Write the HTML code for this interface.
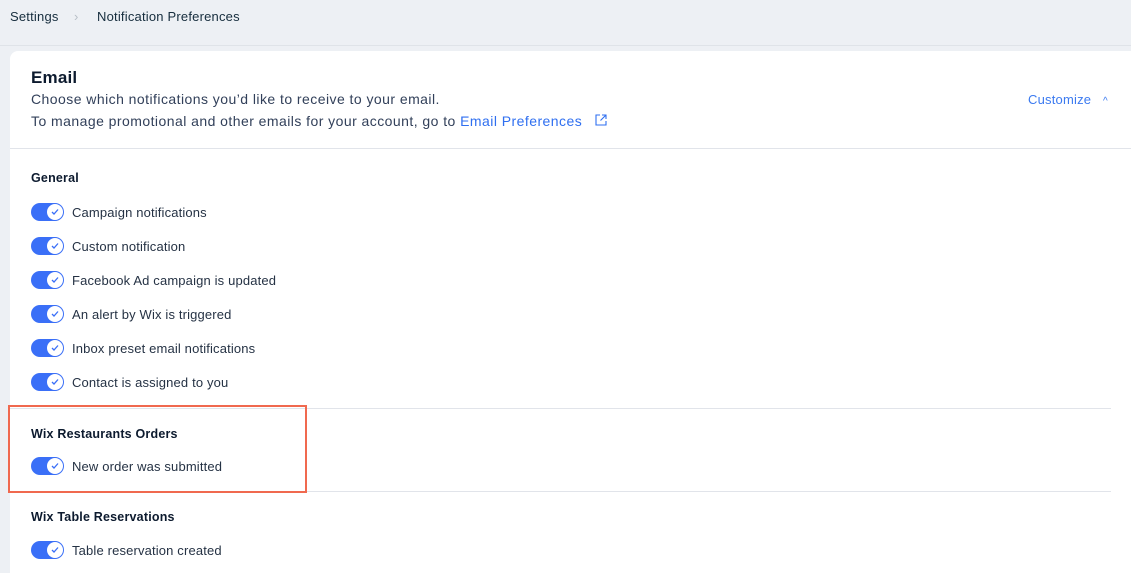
<!DOCTYPE html><html><head><style>
html,body{margin:0;width:1131px;height:573px;overflow:hidden}
body{background:#edf0f4;font-family:"Liberation Sans",sans-serif;color:#162d3d;position:relative}
.bc{position:absolute;top:0;left:0;right:0;height:45px;border-bottom:1px solid #dfe3e8;font-size:13px}
.bc span{position:absolute;top:9px}
.card{position:absolute;left:10px;top:51px;right:-10px;height:540px;background:#fff;border-radius:8px 0 0 0}
.t{position:absolute;font-size:14px;letter-spacing:0.45px;color:#32405a;white-space:nowrap}
.h{position:absolute;font-size:12.5px;font-weight:bold;color:#0c1a2e;letter-spacing:0.2px}
.row{position:absolute;left:21px;height:18px;display:flex;align-items:center;font-size:13px;letter-spacing:0.15px;color:#253244}
.tg{width:33px;height:18px;border-radius:9px;background:#3a6ff7;position:relative;margin-right:8px}
.tg i{position:absolute;right:1px;top:1px;width:16px;height:16px;border-radius:50%;background:#fff}
.tg svg{position:absolute;left:4px;top:4px}
.hr{position:absolute;left:0;height:1px;background:#e1e4ea}
</style></head><body>
<div class="bc"><span style="left:10px;letter-spacing:0.2px">Settings</span><span style="left:74px;color:#b8bfc7">›</span><span style="left:97px;letter-spacing:0.2px">Notification Preferences</span></div>
<div class="card">
<div class="h" style="left:21px;top:17px;font-size:17px">Email</div>
<div class="t" style="left:21px;top:40px">Choose which notifications you’d like to receive to your email.</div>
<div class="t" style="left:21px;top:62px">To manage promotional and other emails for your account, go to <span style="color:#2f6ff0">Email Preferences</span> <svg width="12" height="12" viewBox="0 0 12 12" style="margin-left:8px"><path d="M5 1H1v10h10V7M7 1h4v4M11 1L5.5 6.5" fill="none" stroke="#2f6ff0" stroke-width="1.1"/></svg></div>
<div class="t" style="left:1018px;top:41px;font-size:13px;letter-spacing:0.2px;color:#3b7af0">Customize <span style="margin-left:8px;font-size:10px">^</span></div>
<div class="hr" style="top:97px;left:0;right:0"></div>
<div class="h" style="left:21px;top:120px">General</div>
<div class="row" style="top:152px"><div class="tg"><i><svg width="8" height="8" viewBox="0 0 8 8"><path d="M1 4l2 2 4-4.5" fill="none" stroke="#3a6ff7" stroke-width="1.3"/></svg></i></div>Campaign notifications</div>
<div class="row" style="top:186px"><div class="tg"><i><svg width="8" height="8" viewBox="0 0 8 8"><path d="M1 4l2 2 4-4.5" fill="none" stroke="#3a6ff7" stroke-width="1.3"/></svg></i></div>Custom notification</div>
<div class="row" style="top:220px"><div class="tg"><i><svg width="8" height="8" viewBox="0 0 8 8"><path d="M1 4l2 2 4-4.5" fill="none" stroke="#3a6ff7" stroke-width="1.3"/></svg></i></div>Facebook Ad campaign is updated</div>
<div class="row" style="top:254px"><div class="tg"><i><svg width="8" height="8" viewBox="0 0 8 8"><path d="M1 4l2 2 4-4.5" fill="none" stroke="#3a6ff7" stroke-width="1.3"/></svg></i></div>An alert by Wix is triggered</div>
<div class="row" style="top:288px"><div class="tg"><i><svg width="8" height="8" viewBox="0 0 8 8"><path d="M1 4l2 2 4-4.5" fill="none" stroke="#3a6ff7" stroke-width="1.3"/></svg></i></div>Inbox preset email notifications</div>
<div class="row" style="top:322px"><div class="tg"><i><svg width="8" height="8" viewBox="0 0 8 8"><path d="M1 4l2 2 4-4.5" fill="none" stroke="#3a6ff7" stroke-width="1.3"/></svg></i></div>Contact is assigned to you</div>
<div class="hr" style="top:357px;width:1101px"></div>
<div class="h" style="left:21px;top:376px">Wix Restaurants Orders</div>
<div class="row" style="top:406px"><div class="tg"><i><svg width="8" height="8" viewBox="0 0 8 8"><path d="M1 4l2 2 4-4.5" fill="none" stroke="#3a6ff7" stroke-width="1.3"/></svg></i></div>New order was submitted</div>
<div class="hr" style="top:440px;width:1101px"></div>
<div class="h" style="left:21px;top:459px">Wix Table Reservations</div>
<div class="row" style="top:490px"><div class="tg"><i><svg width="8" height="8" viewBox="0 0 8 8"><path d="M1 4l2 2 4-4.5" fill="none" stroke="#3a6ff7" stroke-width="1.3"/></svg></i></div>Table reservation created</div>
</div>
<div style="position:absolute;left:8px;top:405px;width:295px;height:84px;border:2px solid #f0694f"></div>
</body></html>
